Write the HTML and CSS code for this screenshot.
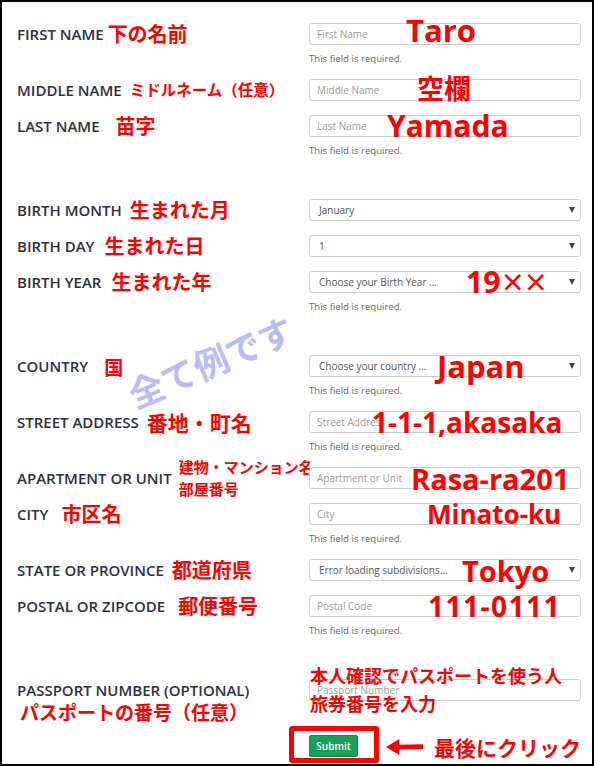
FILE: index.html
```html
<!DOCTYPE html>
<html lang="ja">
<head>
<meta charset="utf-8">
<title>Form</title>
<link rel="stylesheet" href="styles.css">
</head>
<body>
<div class="frame">
  <form class="form">
    <div class="section">
      <div class="field">
        <div class="lab"><span class="lab-text">FIRST NAME</span><span class="note g4">下の名前</span></div>
        <div class="ctl">
          <div class="box"><span>First Name</span><span class="over o-taro">Taro</span></div>
          <div class="err">This field is required.</div>
        </div>
      </div>
      <div class="field">
        <div class="lab"><span class="lab-text">MIDDLE NAME</span><span class="note sm">ミドルネーム（任意）</span></div>
        <div class="ctl">
          <div class="box"><span>Middle Name</span><span class="over cjk o-blank">空欄</span></div>
        </div>
      </div>
      <div class="field">
        <div class="lab"><span class="lab-text">LAST NAME</span><span class="note g16">苗字</span></div>
        <div class="ctl">
          <div class="box"><span>Last Name</span><span class="over o-yamada">Yamada</span></div>
          <div class="err">This field is required.</div>
        </div>
      </div>
    </div>

    <div class="section">
      <div class="field">
        <div class="lab"><span class="lab-text">BIRTH MONTH</span><span class="note">生まれた月</span></div>
        <div class="ctl">
          <div class="box sel"><span>January</span><span class="caret"></span></div>
        </div>
      </div>
      <div class="field">
        <div class="lab"><span class="lab-text">BIRTH DAY</span><span class="note g10">生まれた日</span></div>
        <div class="ctl">
          <div class="box sel"><span>1</span><span class="caret"></span></div>
        </div>
      </div>
      <div class="field">
        <div class="lab"><span class="lab-text">BIRTH YEAR</span><span class="note g10">生まれた年</span></div>
        <div class="ctl">
          <div class="box sel"><span>Choose your Birth Year ...</span><span class="caret"></span><span class="over o-year">19<span class="times">××</span></span></div>
          <div class="err">This field is required.</div>
        </div>
      </div>
    </div>

    <div class="section">
      <div class="field">
        <div class="lab"><span class="lab-text">COUNTRY</span><span class="note g16 n19">国</span></div>
        <div class="ctl">
          <div class="box sel"><span>Choose your country ...</span><span class="caret"></span><span class="over o-japan">Japan</span></div>
          <div class="err">This field is required.</div>
        </div>
      </div>
      <div class="field">
        <div class="lab"><span class="lab-text">STREET ADDRESS</span><span class="note n21">番地・町名</span></div>
        <div class="ctl">
          <div class="box"><span>Street Address</span><span class="over o-street">1-1-1,akasaka</span></div>
          <div class="err">This field is required.</div>
        </div>
      </div>
      <div class="field">
        <div class="lab"><span class="lab-text">APARTMENT OR UNIT</span><span class="note xs">建物・マンション名<br>部屋番号</span></div>
        <div class="ctl">
          <div class="box"><span>Apartment or Unit</span><span class="over o-apt">Rasa-ra201</span></div>
        </div>
      </div>
      <div class="field">
        <div class="lab"><span class="lab-text">CITY</span><span class="note g13">市区名</span></div>
        <div class="ctl">
          <div class="box"><span>City</span><span class="over o-city">Minato-ku</span></div>
          <div class="err">This field is required.</div>
        </div>
      </div>
      <div class="field">
        <div class="lab"><span class="lab-text">STATE OR PROVINCE</span><span class="note">都道府県</span></div>
        <div class="ctl">
          <div class="box sel"><span>Error loading subdivisions...</span><span class="caret"></span><span class="over o-state">Tokyo</span></div>
        </div>
      </div>
      <div class="field">
        <div class="lab"><span class="lab-text">POSTAL OR ZIPCODE</span><span class="note g13">郵便番号</span></div>
        <div class="ctl">
          <div class="box"><span>Postal Code</span><span class="over o-zip">111-0111</span></div>
          <div class="err">This field is required.</div>
        </div>
      </div>
    </div>

    <div class="section section--end">
      <div class="field">
        <div class="lab-stack">
          <div class="lab"><span class="lab-text">PASSPORT NUMBER (OPTIONAL)</span></div>
          <div class="note-below">パスポートの番号（任意）</div>
        </div>
        <div class="ctl">
          <div class="box"><span>Passport Number</span><span class="over cjk o-pass">本人確認でパスポートを使う人<br>旅券番号を入力</span></div>
        </div>
      </div>
      <div class="submit-row">
        <div class="hl"><button type="button" class="btn">Submit</button></div>
        <svg class="arrow" width="42" height="20" viewBox="0 0 42 20" aria-hidden="true">
          <polygon points="0,10 15,1 15,7.5 42,7 42,12.5 15,12.5 15,19" fill="#f00"/>
        </svg>
        <span class="cta">最後にクリック</span>
      </div>
    </div>
  </form>
  <div class="wm">全て例です</div>
</div>
</body>
</html>
```

FILE: styles.css
```css
* { box-sizing: border-box; }
html, body { margin: 0; padding: 0; background: #fff; }

.frame {
  position: relative;
  width: 594px;
  height: 766px;
  border: 2px solid #000;
  overflow: hidden;
  padding: 21px 11px 0 15px;
  font-family: "Open Sans", "Noto Sans CJK JP", sans-serif;
  background: #fff;
}

.form { display: flex; flex-direction: column; gap: 42px; }
.section { display: flex; flex-direction: column; gap: 14px; }
.section--end { gap: 3px; }

.field {
  display: grid;
  grid-template-columns: 292px 272px;
  align-items: start;
}

.lab {
  height: 22px;
  display: flex;
  align-items: center;
  white-space: nowrap;
}
.lab-stack { display: flex; flex-direction: column; }

.lab-text {
  font-size: 15px;
  font-weight: 600;
  color: #2b3140;
}

.note {
  color: #f00;
  font-family: "Noto Sans CJK JP", sans-serif;
  font-weight: 700;
  font-size: 20px;
  line-height: 1;
  margin-left: 8px;
}
.note.g4 { margin-left: 4px; }
.note.g10 { margin-left: 10px; }
.note.g13 { margin-left: 13px; }
.note.g16 { margin-left: 16px; }
.note.n19 { font-size: 19px; }
.note.n21 { font-size: 21px; }
.note.sm { font-size: 15.5px; }
.note.xs { font-size: 15px; line-height: 22px; margin-left: 7px; }

.note-below {
  color: #f00;
  font-family: "Noto Sans CJK JP", sans-serif;
  font-weight: 700;
  font-size: 19px;
  line-height: 22px;
  margin-left: 3px;
  white-space: nowrap;
}

.ctl { display: flex; flex-direction: column; }

.box {
  position: relative;
  height: 22px;
  border: 1px solid #ccc;
  border-radius: 3px;
  background: #fff;
  display: flex;
  align-items: center;
  padding: 0 5px 0 7px;
  font-size: 10px;
  color: #9a9a9a;
  white-space: nowrap;
}
.box.sel {
  padding-left: 9px;
  justify-content: space-between;
  color: #555;
}
.caret {
  width: 0;
  height: 0;
  border-left: 3.5px solid transparent;
  border-right: 3.5px solid transparent;
  border-top: 6px solid #444;
}

.err {
  margin-top: 7px;
  line-height: 13px;
  font-size: 9.6px;
  color: #666;
  white-space: nowrap;
}

.over {
  position: absolute;
  top: 50%;
  transform: translateY(-50%);
  color: #f00;
  font-family: "Open Sans", "Noto Sans CJK JP", sans-serif;
  font-weight: 700;
  line-height: 1;
  white-space: nowrap;
}
.cjk { font-family: "Noto Sans CJK JP", sans-serif; }
.times {
  font-family: "Noto Sans CJK JP", sans-serif;
  font-size: 25px;
  letter-spacing: -2px;
  vertical-align: 1px;
}

.o-taro { left: 96px; font-size: 31px; transform: translateY(calc(-50% - 4px)); }
.o-blank { left: 107px; font-size: 27px; transform: translateY(calc(-50% - 3px)); }
.o-yamada { left: 77px; font-size: 30px; }
.o-year { left: 156px; font-size: 30px; }
.o-japan { left: 127px; font-size: 31px; }
.o-street { left: 62px; font-size: 28px; }
.o-apt { left: 101px; font-size: 29px; }
.o-city { left: 117px; font-size: 26px; }
.o-state { left: 152px; font-size: 29px; }
.o-zip { left: 118px; font-size: 28px; letter-spacing: 1.5px; }
.o-pass { left: 0; font-size: 18px; line-height: 28px; transform: translateY(calc(-50% - 1px)); }

.submit-row {
  display: flex;
  align-items: center;
  padding-left: 272px;
}
.hl {
  border: 5px solid #f00;
  border-radius: 3px;
  padding: 4px 16px 1px 15px;
}
.btn {
  display: block;
  width: 49px;
  height: 22px;
  margin: 0;
  padding: 0;
  border: 1px solid #12884c;
  border-radius: 2px;
  background: #17a25c;
  color: #fff;
  font-family: "Open Sans", sans-serif;
  font-size: 10px;
  font-weight: 600;
}
.arrow { margin-left: 7px; margin-top: 5px; }
.cta {
  margin-left: 11px;
  margin-top: 5px;
  color: #f00;
  font-family: "Noto Sans CJK JP", sans-serif;
  font-weight: 700;
  font-size: 21px;
  line-height: 1;
  white-space: nowrap;
}

.wm {
  position: absolute;
  left: 118px;
  top: 341px;
  width: 180px;
  text-align: center;
  font-family: "Noto Sans CJK JP", sans-serif;
  font-weight: 700;
  font-size: 35px;
  line-height: 35px;
  color: #b9bcf8;
  transform: rotate(-23deg);
  white-space: nowrap;
}
```
